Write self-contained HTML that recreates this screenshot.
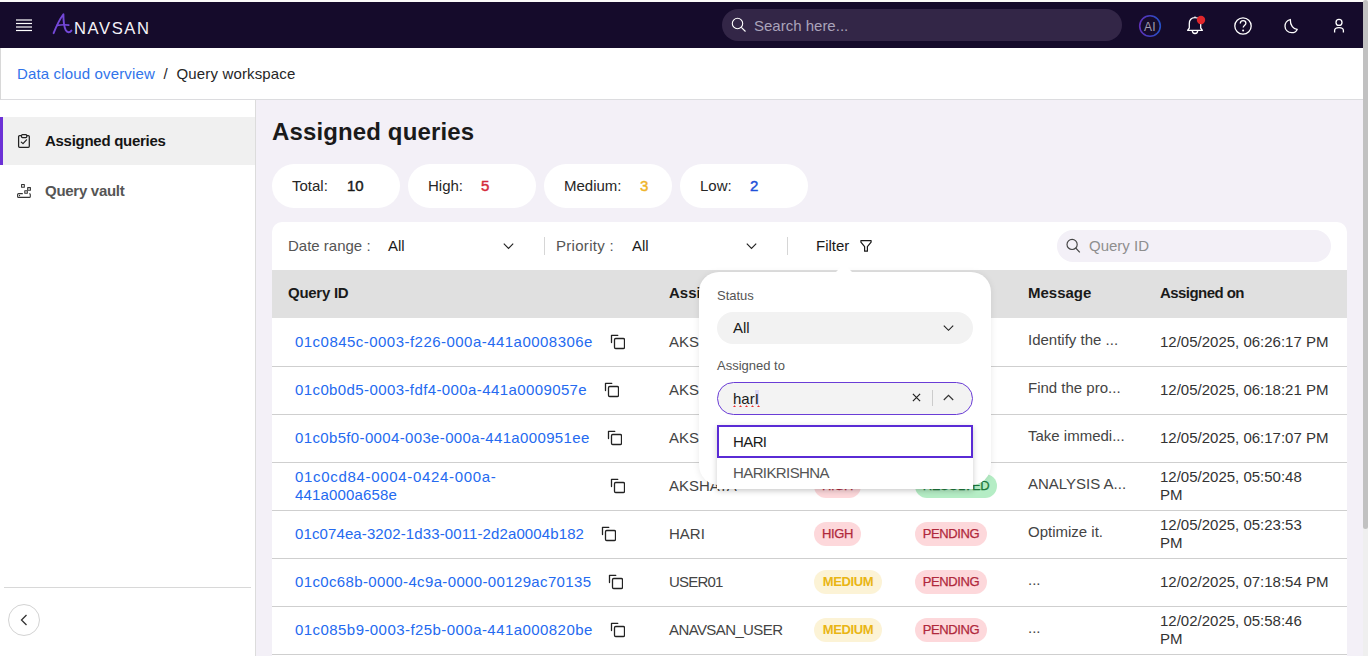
<!DOCTYPE html>
<html><head><meta charset="utf-8">
<style>
*{box-sizing:border-box;margin:0;padding:0}
html,body{width:1368px;height:656px;overflow:hidden;background:#fff;font-family:"Liberation Sans",sans-serif;color:#1a1a1a}
.abs{position:absolute}
#top{position:absolute;left:0;top:0;width:1368px;height:2px;background:#fafaf8}
#hdr{position:absolute;left:0;top:2px;width:1363px;height:46px;background:#150b2b}
#sb{position:absolute;left:1363px;top:0;width:5px;height:656px;background:#efefef}
#thumb{position:absolute;left:1363px;top:0;width:5px;height:529px;background:#c1c1c1;border-radius:3px}
#search{position:absolute;left:722px;top:9px;width:400px;height:32px;border-radius:16px;background:#332647}
#search span{position:absolute;left:32px;top:8px;font-size:15px;color:#aaa3ba}
#crumb{position:absolute;left:0;top:48px;width:1363px;height:52px;background:#fff;border-left:1px solid #d8d8d8;border-bottom:1px solid #dcdcdf}
#crumb .t{position:absolute;left:16px;top:17px;font-size:15px;color:#262626;white-space:nowrap;letter-spacing:0.15px}
#crumb a{color:#3174ea;text-decoration:none}
#side{position:absolute;left:0;top:100px;width:256px;height:556px;background:#fff;border-right:1px solid #dcdcdc}
#main{position:absolute;left:256px;top:100px;width:1107px;height:556px;background:#f3f0f7}

.si{position:absolute;left:0;width:255px;height:48px}
.si .lbl{position:absolute;left:45px;top:15px;font-size:15px;font-weight:bold;white-space:nowrap;letter-spacing:-0.28px}
#title{position:absolute;left:272px;top:118px;font-size:24px;font-weight:bold;color:#1a1a1a;white-space:nowrap;letter-spacing:0.13px}
.pill{position:absolute;top:164px;width:128px;height:44px;border-radius:22px;background:#fff;font-size:15px;color:#262626}
.pill span{position:absolute;top:13px;white-space:nowrap}
#card{position:absolute;left:272px;top:222px;width:1075px;height:434px;background:#fff;border-radius:10px 10px 0 0;overflow:hidden}
.ft{position:absolute;top:237px;font-size:15px;white-space:nowrap}
.sep{position:absolute;top:237px;width:1px;height:18px;background:#d6d6d6}
#qsearch{position:absolute;left:1057px;top:230px;width:274px;height:32px;border-radius:16px;background:#f3f0f7}
#qsearch span{position:absolute;left:32px;top:7px;font-size:15px;color:#8e8e8e}
#thead{position:absolute;left:272px;top:270px;width:1075px;height:48px;background:#e0e0e0}
.th{position:absolute;top:284px;font-size:15px;font-weight:bold;color:#1a1a1a;white-space:nowrap}
.row{position:absolute;left:272px;width:1075px;height:48px;border-bottom:1px solid #cfcfcf;background:#fff}
.c{position:absolute;font-size:15px;color:#444;white-space:nowrap;line-height:18px}
.lnk{color:#246af0;letter-spacing:0.47px}
.badge{position:absolute;height:24px;border-radius:12px;font-size:13px;line-height:24px;text-align:center;white-space:nowrap;letter-spacing:-0.4px;-webkit-text-stroke:0.25px currentColor}
.hi{background:#fdd8db;color:#b0283c}
.md{background:#fcf3d6;color:#e9b514;font-weight:bold;-webkit-text-stroke:0}
.pd{background:#fdd8db;color:#b0283c}
.rs{background:#b5edc5;color:#1e7a3c}
#pop{position:absolute;left:699px;top:272px;width:292px;height:213px;background:#fff;border-radius:20px;box-shadow:0 1px 7px rgba(0,0,0,0.09)}
</style></head><body>
<div id="top"></div>
<div id="hdr">
  <svg class="abs" style="left:16px;top:17px" width="16" height="13" viewBox="0 0 16 13"><g stroke="#fff" stroke-width="1.2"><line x1="0" y1="1" x2="16" y2="1"/><line x1="0" y1="4.5" x2="16" y2="4.5"/><line x1="0" y1="8" x2="16" y2="8"/><line x1="0" y1="11.5" x2="16" y2="11.5"/></g></svg>
  <svg class="abs" style="left:0;top:-2px" width="1363" height="48" viewBox="0 0 1363 48">
    <g fill="none" stroke-linecap="round" stroke-linejoin="round">
      <path d="M53.6,33.2 C56,27 59.5,19.5 63.4,14.2 C63.4,20 63.8,26.5 65.8,30.2 C67.2,32.6 69.8,33 71.4,30.6" stroke="#7448d8" stroke-width="1.9"/>
      <path d="M57.2,25.4 C61,24.7 65,24.6 68.8,25.1" stroke="#7448d8" stroke-width="1.6"/>
    </g>
    <text x="74" y="33.6" fill="#f4f2f8" font-family="Liberation Sans" font-size="16.6" letter-spacing="1.6">NAVSAN</text>
    <defs><linearGradient id="aig" x1="0" y1="0" x2="1" y2="0"><stop offset="0" stop-color="#5e30b8"/><stop offset="1" stop-color="#2550c6"/></linearGradient></defs>
    <circle cx="1150" cy="26" r="10.3" fill="none" stroke="url(#aig)" stroke-width="1.6"/>
    <text x="1150" y="30.5" text-anchor="middle" fill="#a29cb0" font-family="Liberation Sans" font-size="12" letter-spacing="0.3">AI</text>
    <g fill="none" stroke="#fff" stroke-width="1.3" stroke-linejoin="round">
      <path d="M1195,17.6 C1191.3,17.6 1189.3,20.2 1189.3,23.8 L1189.3,28 L1187.6,30.3 L1202.4,30.3 L1200.7,28 L1200.7,23.8 C1200.7,20.2 1198.7,17.6 1195,17.6 Z M1195,16.4 L1195,17.6"/>
      <path d="M1192.3,30.5 A2.7,3 0 0 0 1197.7,30.5"/>
      <circle cx="1243" cy="26" r="8.2"/>
      <path d="M1240.3,23.6 C1240.3,21.6 1241.6,20.6 1243.1,20.6 C1244.7,20.6 1245.9,21.7 1245.9,23.2 C1245.9,25 1243.2,25.4 1243.2,27.6"/>
      <path d="M1290.3,19.5 C1287.2,20.4 1285,23.1 1285,26.3 C1285,30 1288.1,32.7 1291.7,32.7 C1294.3,32.7 1296.4,31.3 1297.2,29.4 C1293.5,29 1290.1,25.6 1290.3,19.5 Z"/>
      <circle cx="1339" cy="22.4" r="3"/>
      <path d="M1334.6,32.6 L1334.6,30.6 C1334.6,28.6 1336.3,27.6 1339,27.6 C1341.7,27.6 1343.4,28.6 1343.4,30.6 L1343.4,32.6"/>
    </g>
    <circle cx="1243.1" cy="30.6" r="1" fill="#fff"/>
    <circle cx="1201" cy="20" r="4.2" fill="#e0262b"/>
  </svg>
</div>
<div id="search"><svg class="abs" style="left:9px;top:8px" width="16" height="16" viewBox="0 0 16 16"><circle cx="6.5" cy="6.5" r="5.2" fill="none" stroke="#fff" stroke-width="1.1"/><line x1="10.3" y1="10.3" x2="14.5" y2="14.5" stroke="#fff" stroke-width="1.1"/></svg><span>Search here...</span></div>
<div id="crumb"><div class="t"><a>Data cloud overview</a>&nbsp; / &nbsp;Query workspace</div></div>

<div id="side">
  <div class="si" style="top:17px;background:#f0f0f0"><div style="position:absolute;left:0;top:0;width:3px;height:48px;background:#6c31d6"></div>
    <svg class="abs" style="left:17px;top:16px" width="14" height="16" viewBox="0 0 14 16"><g fill="none" stroke="#222" stroke-width="1.25" stroke-linejoin="round" stroke-linecap="round"><path d="M4.2,2.6 L2.6,2.6 Q1.6,2.6 1.6,3.6 L1.6,13.3 Q1.6,14.3 2.6,14.3 L11.3,14.3 Q12.3,14.3 12.3,13.3 L12.3,3.6 Q12.3,2.6 11.3,2.6 L9.8,2.6"/><rect x="4.5" y="1.6" width="5.3" height="2.9" rx="0.9"/><path d="M4.3,9.1 L6,10.6 L9.5,6.8"/></g></svg>
    <div class="lbl" style="color:#151515">Assigned queries</div></div>
  <div class="si" style="top:67px">
    <svg class="abs" style="left:17px;top:16px" width="15" height="16" viewBox="0 0 15 16"><g fill="none" stroke="#333" stroke-width="1.1" stroke-linejoin="round"><rect x="4.6" y="1.5" width="2.7" height="2.7"/><rect x="10.7" y="4.6" width="2.7" height="2.7"/><rect x="7.8" y="7.7" width="2.5" height="2.5"/><path d="M5.8,10.6 L1.6,10.6 Q0.6,10.6 0.6,11.6 L0.6,13.4 Q0.6,14.4 1.6,14.4 L12.3,14.4 Q13.3,14.4 13.3,13.4 L13.3,11.6 Q13.3,10.6 12.3,10.6"/></g><circle cx="2.5" cy="12.5" r="0.65" fill="#333"/></svg>
    <div class="lbl" style="color:#555">Query vault</div></div>
  <div style="position:absolute;left:4px;top:487px;width:247px;height:1px;background:#d8d8d8"></div>
  <div style="position:absolute;left:8px;top:504px;width:32px;height:32px;border-radius:50%;border:1px solid #d3d3d3"></div>
  <svg class="abs" style="left:20px;top:514px" width="8" height="12" viewBox="0 0 8 12"><path d="M6.5,1 L1.5,6 L6.5,11" fill="none" stroke="#333" stroke-width="1.3"/></svg>
</div>
<div id="main"></div>
<div id="title">Assigned queries</div>
<div class="pill" style="left:272px"><span style="left:20px">Total:</span><span style="left:75px;-webkit-text-stroke:0.45px #1a1a1a;color:#1a1a1a">10</span></div>
<div class="pill" style="left:408px"><span style="left:20px">High:</span><span style="left:73px;-webkit-text-stroke:0.45px #d42a3a;color:#d42a3a">5</span></div>
<div class="pill" style="left:544px"><span style="left:20px">Medium:</span><span style="left:96px;-webkit-text-stroke:0.45px #efb428;color:#efb428">3</span></div>
<div class="pill" style="left:680px"><span style="left:20px">Low:</span><span style="left:70px;-webkit-text-stroke:0.45px #2050d8;color:#2050d8">2</span></div>
<div id="card"></div>
<div class="ft" style="left:288px;color:#555">Date range :</div>
<div class="ft" style="left:388px;color:#1a1a1a">All</div>
<svg class="abs" style="left:502px;top:241px" width="13" height="10" viewBox="0 0 13 10"><path d="M1.8,2.7 L6.5,7.4 L11.2,2.7" fill="none" stroke="#222" stroke-width="1.15"/></svg>
<div class="sep" style="left:544px"></div>
<div class="ft" style="left:556px;color:#555;letter-spacing:0.3px">Priority :</div>
<div class="ft" style="left:632px;color:#1a1a1a">All</div>
<svg class="abs" style="left:745px;top:241px" width="13" height="10" viewBox="0 0 13 10"><path d="M1.8,2.7 L6.5,7.4 L11.2,2.7" fill="none" stroke="#222" stroke-width="1.15"/></svg>
<div class="sep" style="left:787px"></div>
<div class="ft" style="left:816px;color:#1a1a1a">Filter</div>
<svg class="abs" style="left:858px;top:238px" width="15" height="15" viewBox="0 0 15 15"><path d="M2.9,2.6 L13.1,2.6 L13.1,4.2 L9.4,8.6 L9.4,13.2 L6.6,13.2 L6.6,8.6 L2.9,4.2 Z" fill="none" stroke="#1a1a1a" stroke-width="1.2" stroke-linejoin="round"/></svg>
<div id="qsearch"><svg class="abs" style="left:9px;top:8px" width="16" height="16" viewBox="0 0 16 16"><circle cx="6.1" cy="6.4" r="5.1" fill="none" stroke="#444" stroke-width="1.15"/><line x1="9.7" y1="10" x2="13.8" y2="14.4" stroke="#444" stroke-width="1.15"/></svg><span>Query ID</span></div>
<div id="thead"></div>
<div class="th" style="left:288px;letter-spacing:-0.27px">Query ID</div>
<div class="th" style="left:669px">Assigned to</div>
<div class="th" style="left:814px">Priority</div>
<div class="th" style="left:915px">Status</div>
<div class="th" style="left:1028px">Message</div>
<div class="th" style="left:1160px;letter-spacing:-0.56px">Assigned on</div>
<div class="row" style="top:319px"></div>
<div class="c lnk" style="left:295px;top:333px;letter-spacing:0.467px">01c0845c-0003-f226-000a-441a0008306e</div>
<svg class="abs" style="left:608.7px;top:334px" width="16" height="16" viewBox="0 0 16 16"><g fill="none" stroke="#222" stroke-width="1.3" stroke-linecap="round" stroke-linejoin="round"><path d="M2.5,8.6 L2.5,1.3 L8.8,1.3"/><rect x="5.5" y="4.5" width="10" height="10" rx="1.2"/></g></svg>
<div class="c" style="left:669px;top:333px;letter-spacing:0px">AKSHATA</div>
<div class="badge hi" style="left:814px;top:330px;width:47px">HIGH</div>
<div class="badge pd" style="left:915px;top:330px;width:72px">PENDING</div>
<div class="c" style="left:1028px;top:331px">Identify the ...</div>
<div class="c" style="left:1160px;top:333px;color:#333">12/05/2025, 06:26:17 PM</div>
<div class="row" style="top:367px"></div>
<div class="c lnk" style="left:295px;top:381px;letter-spacing:0.399px">01c0b0d5-0003-fdf4-000a-441a0009057e</div>
<svg class="abs" style="left:602.8px;top:382px" width="16" height="16" viewBox="0 0 16 16"><g fill="none" stroke="#222" stroke-width="1.3" stroke-linecap="round" stroke-linejoin="round"><path d="M2.5,8.6 L2.5,1.3 L8.8,1.3"/><rect x="5.5" y="4.5" width="10" height="10" rx="1.2"/></g></svg>
<div class="c" style="left:669px;top:381px;letter-spacing:0px">AKSHATA</div>
<div class="badge hi" style="left:814px;top:378px;width:47px">HIGH</div>
<div class="badge pd" style="left:915px;top:378px;width:72px">PENDING</div>
<div class="c" style="left:1028px;top:379px">Find the pro...</div>
<div class="c" style="left:1160px;top:381px;color:#333">12/05/2025, 06:18:21 PM</div>
<div class="row" style="top:415px"></div>
<div class="c lnk" style="left:295px;top:429px;letter-spacing:0.353px">01c0b5f0-0004-003e-000a-441a000951ee</div>
<svg class="abs" style="left:605.5px;top:430px" width="16" height="16" viewBox="0 0 16 16"><g fill="none" stroke="#222" stroke-width="1.3" stroke-linecap="round" stroke-linejoin="round"><path d="M2.5,8.6 L2.5,1.3 L8.8,1.3"/><rect x="5.5" y="4.5" width="10" height="10" rx="1.2"/></g></svg>
<div class="c" style="left:669px;top:429px;letter-spacing:0px">AKSHATA</div>
<div class="badge hi" style="left:814px;top:426px;width:47px">HIGH</div>
<div class="badge pd" style="left:915px;top:426px;width:72px">PENDING</div>
<div class="c" style="left:1028px;top:427px">Take immedi...</div>
<div class="c" style="left:1160px;top:429px;color:#333">12/05/2025, 06:17:07 PM</div>
<div class="row" style="top:463px"></div>
<div class="c lnk" style="left:295px;top:468px;letter-spacing:0px"><span style="letter-spacing:0.68px">01c0cd84-0004-0424-000a-</span><br><span style="letter-spacing:0.15px">441a000a658e</span></div>
<svg class="abs" style="left:608.5px;top:478px" width="16" height="16" viewBox="0 0 16 16"><g fill="none" stroke="#222" stroke-width="1.3" stroke-linecap="round" stroke-linejoin="round"><path d="M2.5,8.6 L2.5,1.3 L8.8,1.3"/><rect x="5.5" y="4.5" width="10" height="10" rx="1.2"/></g></svg>
<div class="c" style="left:669px;top:477px;letter-spacing:0px">AKSHATA</div>
<div class="badge hi" style="left:814px;top:474px;width:47px">HIGH</div>
<div class="badge rs" style="left:915px;top:474px;width:82px">RESOLVED</div>
<div class="c" style="left:1028px;top:475px">ANALYSIS A...</div>
<div class="c" style="left:1160px;top:468px;color:#333">12/05/2025, 05:50:48<br>PM</div>
<div class="row" style="top:511px"></div>
<div class="c lnk" style="left:295px;top:525px;letter-spacing:0.113px">01c074ea-3202-1d33-0011-2d2a0004b182</div>
<svg class="abs" style="left:600.4px;top:526px" width="16" height="16" viewBox="0 0 16 16"><g fill="none" stroke="#222" stroke-width="1.3" stroke-linecap="round" stroke-linejoin="round"><path d="M2.5,8.6 L2.5,1.3 L8.8,1.3"/><rect x="5.5" y="4.5" width="10" height="10" rx="1.2"/></g></svg>
<div class="c" style="left:669px;top:525px;letter-spacing:0px">HARI</div>
<div class="badge hi" style="left:814px;top:522px;width:47px">HIGH</div>
<div class="badge pd" style="left:915px;top:522px;width:72px">PENDING</div>
<div class="c" style="left:1028px;top:523px">Optimize it.</div>
<div class="c" style="left:1160px;top:516px;color:#333">12/05/2025, 05:23:53<br>PM</div>
<div class="row" style="top:559px"></div>
<div class="c lnk" style="left:295px;top:573px;letter-spacing:0.356px">01c0c68b-0000-4c9a-0000-00129ac70135</div>
<svg class="abs" style="left:607.3px;top:574px" width="16" height="16" viewBox="0 0 16 16"><g fill="none" stroke="#222" stroke-width="1.3" stroke-linecap="round" stroke-linejoin="round"><path d="M2.5,8.6 L2.5,1.3 L8.8,1.3"/><rect x="5.5" y="4.5" width="10" height="10" rx="1.2"/></g></svg>
<div class="c" style="left:669px;top:573px;letter-spacing:-0.8px">USER01</div>
<div class="badge md" style="left:814px;top:570px;width:68px">MEDIUM</div>
<div class="badge pd" style="left:915px;top:570px;width:72px">PENDING</div>
<div class="c" style="left:1028px;top:571px">...</div>
<div class="c" style="left:1160px;top:573px;color:#333">12/02/2025, 07:18:54 PM</div>
<div class="row" style="top:607px"></div>
<div class="c lnk" style="left:295px;top:621px;letter-spacing:0.439px">01c085b9-0003-f25b-000a-441a000820be</div>
<svg class="abs" style="left:608.5px;top:622px" width="16" height="16" viewBox="0 0 16 16"><g fill="none" stroke="#222" stroke-width="1.3" stroke-linecap="round" stroke-linejoin="round"><path d="M2.5,8.6 L2.5,1.3 L8.8,1.3"/><rect x="5.5" y="4.5" width="10" height="10" rx="1.2"/></g></svg>
<div class="c" style="left:669px;top:621px;letter-spacing:-0.6px">ANAVSAN_USER</div>
<div class="badge md" style="left:814px;top:618px;width:68px">MEDIUM</div>
<div class="badge pd" style="left:915px;top:618px;width:72px">PENDING</div>
<div class="c" style="left:1028px;top:619px">...</div>
<div class="c" style="left:1160px;top:612px;color:#333">12/02/2025, 05:58:46<br>PM</div>
<div id="pop">
  <svg class="abs" style="left:136px;top:-8px" width="18" height="9" viewBox="0 0 18 9"><path d="M0,9 L9,0 L18,9 Z" fill="#fff"/></svg>
  <div class="abs" style="left:18px;top:16px;font-size:13px;color:#555">Status</div>
  <div class="abs" style="left:18px;top:40px;width:256px;height:32px;border-radius:16px;background:#f2f2f2">
    <span class="abs" style="left:16px;top:7px;font-size:15px;color:#1a1a1a">All</span>
    <svg class="abs" style="left:225px;top:11px" width="13" height="10" viewBox="0 0 13 10"><path d="M1.8,2.6 L6.5,7.3 L11.2,2.6" fill="none" stroke="#222" stroke-width="1.15"/></svg>
  </div>
  <div class="abs" style="left:18px;top:86px;font-size:13px;color:#555">Assigned to</div>
  <div class="abs" style="left:18px;top:110px;width:256px;height:33px;border-radius:16.5px;background:#f3f3f3;border:1.5px solid #6a3dd6">
    <div class="abs" style="left:36.5px;top:6.5px;width:4.5px;height:15.5px;background:#dcd8f4"></div>
    <span class="abs" style="left:15px;top:7px;font-size:15px;color:#1a1a1a">harI</span>
    <svg class="abs" style="left:14px;top:20.5px" width="28" height="4" viewBox="0 0 28 4"><g fill="#ee2a2a"><path d="M1,3 L2.5,1.2 L4,3Z"/><path d="M7,3 L8.5,1.2 L10,3Z"/><path d="M13,3 L14.5,1.2 L16,3Z"/><path d="M19,3 L20.5,1.2 L22,3Z"/><path d="M25,3 L26.5,1.2 L28,3Z"/></g></svg>
    <svg class="abs" style="left:192.6px;top:9px" width="11" height="11" viewBox="0 0 11 11"><path d="M1.9,1.9 L9.1,9.1 M9.1,1.9 L1.9,9.1" stroke="#222" stroke-width="1.2"/></svg>
    <div class="abs" style="left:214px;top:7px;width:1px;height:16px;background:#ccc"></div>
    <svg class="abs" style="left:224px;top:9px" width="13" height="10" viewBox="0 0 13 10"><path d="M1.8,8 L6.5,3.3 L11.2,8" fill="none" stroke="#333" stroke-width="1.2"/></svg>
  </div>
</div>
<div class="abs" style="left:717px;top:425px;width:256px;height:64px;background:#fff;box-shadow:0 2px 6px rgba(0,0,0,0.2)">
  <div class="abs" style="left:0;top:0;width:256px;height:33px;border:2px solid #5a2bd5"></div>
  <span class="abs" style="left:16px;top:8px;font-size:15px;color:#1a1a1a;letter-spacing:-0.6px">HARI</span>
  <span class="abs" style="left:16px;top:39px;font-size:15px;color:#555;letter-spacing:-0.6px">HARIKRISHNA</span>
</div>
<div id="sb"></div><div id="thumb"></div>
</body></html>
